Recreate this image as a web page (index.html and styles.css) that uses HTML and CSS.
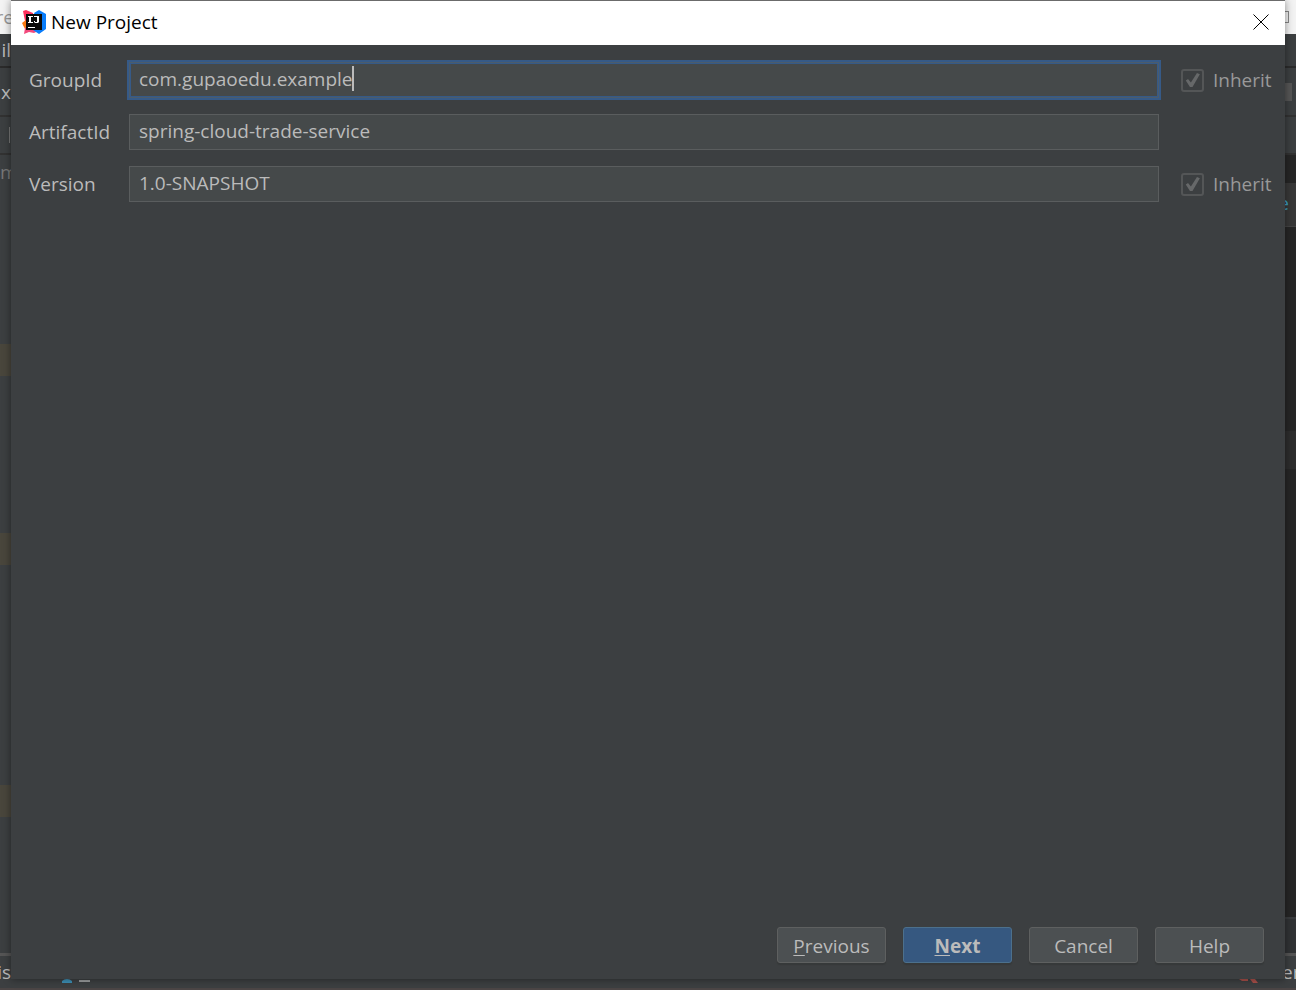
FILE: index.html
```html
<!DOCTYPE html>
<html lang="en">
<head>
    <meta charset="UTF-8">
    <meta name="viewport" content="width=device-width, initial-scale=1.0">
    <title>New Project</title>
    <link rel="stylesheet" href="styles.css">
</head>
<body>

    <!-- main IDE window, only its edges show around the dialog -->
    <div class="ide" aria-hidden="true">
        <div class="ide-row ide-title">
            <span class="edge edge-left">re</span>
            <span class="edge"><i class="maximize"></i></span>
        </div>
        <div class="ide-row ide-menu">
            <span class="edge edge-left">il</span>
        </div>
        <div class="ide-row ide-nav">
            <span class="edge edge-left">.x</span>
            <span class="edge"><i class="nav-button"></i></span>
        </div>
        <div class="ide-row ide-tabs">
            <i class="tab-divider"></i>
        </div>
        <div class="ide-body">
            <div class="tree">
                <span class="edge tree-title">m</span>
                <div class="tree-mark mark-1"></div>
                <div class="tree-mark mark-2"></div>
                <div class="tree-mark mark-3"></div>
            </div>
            <div class="editor">
                <div class="editor-tab"><span class="edge editor-link">e</span></div>
                <div class="editor-line"></div>
                <div class="editor-foot"></div>
            </div>
        </div>
        <div class="ide-row ide-status">
            <span class="edge edge-left">is</span>
            <svg class="status-icons" width="30" height="4" viewBox="0 0 30 4">
                <path d="M0 4V2q2-2 5-2t5 2v2z" fill="#3d8fb5"/>
                <path d="M17 1h11v2H17z" fill="#9a9c9d"/>
            </svg>
            <svg class="status-error" width="20" height="4" viewBox="0 0 20 4">
                <path d="M0 0h9v2H3zM11 0h5l3 4h-5z" fill="#a8504a"/>
            </svg>
            <span class="status-text">er</span>
        </div>
    </div>

    <main class="dialog" role="dialog" aria-labelledby="dialog-title">
        <header class="dialog-header">
            <svg class="logo" width="24" height="24" viewBox="0 0 24 24">
                <path d="M1 1l3-1 7 3 1 8-7 6-4-2 2-4z" fill="#fe315d"/>
                <path d="M0 13l4-3 4 8-5 1z" fill="#f97a12"/>
                <path d="M3 18l9-3 6 5-6 3-5-1-5 2z" fill="#f2497c"/>
                <path d="M12 3l5-3 7 4v15l-7 5-6-4 5-6z" fill="#087cfa"/>
                <path d="M4 4h16v16H4z" fill="#090909"/>
                <path d="M6 6h5v1H9v5h2v1H6v-1h1V7H6zM12 6h5v6l-1 1h-3l-1-1v-1h1v1h2V7h-3zM6 17h7v1H6z" fill="#fff"/>
            </svg>
            <h1 id="dialog-title" class="dialog-title">New Project</h1>
            <button type="button" class="close" aria-label="Close">
                <svg width="16" height="16" viewBox="0 0 16 16">
                    <path d="M0.5 0.5l15 15M15.5 0.5l-15 15" stroke="#000" fill="none"/>
                </svg>
            </button>
        </header>

        <form class="form">
            <div class="fields">
                <label for="group-id">GroupId</label>
                <div class="field focused">
                    <input id="group-id" class="text-input" type="text" value="com.gupaoedu.example" spellcheck="false">
                    <i class="caret"></i>
                </div>
                <label class="inherit"><input type="checkbox" class="check" checked disabled>Inherit</label>

                <label for="artifact-id">ArtifactId</label>
                <div class="field">
                    <input id="artifact-id" class="text-input" type="text" value="spring-cloud-trade-service" spellcheck="false">
                </div>
                <span></span>

                <label for="version">Version</label>
                <div class="field">
                    <input id="version" class="text-input" type="text" value="1.0-SNAPSHOT" spellcheck="false">
                </div>
                <label class="inherit"><input type="checkbox" class="check" checked disabled>Inherit</label>
            </div>

            <div class="buttons">
                <button type="button" class="btn"><u>P</u>revious</button>
                <button type="button" class="btn btn-primary"><u>N</u>ext</button>
                <button type="button" class="btn">Cancel</button>
                <button type="button" class="btn">Help</button>
            </div>
        </form>
    </main>

</body>
</html>
```

FILE: styles.css
```css
* {
    box-sizing: border-box;
}

body {
    margin: 0;
    min-height: 100vh;
    display: flex;
    padding: 1px 11px 11px;
    background-color: #3c3f41;
    color: #bbbbbb;
    font-family: "Open Sans", "Noto Sans", sans-serif;
    font-size: 19px;
    line-height: 24px;
}

/* ---------- IDE behind the dialog ---------- */

.ide {
    position: absolute;
    inset: 0;
    display: flex;
    flex-direction: column;
    overflow: hidden;
    background-color: #3c3f41;
    border-bottom: 2px solid #4b4545;
}

.ide-row {
    display: flex;
    align-items: center;
    justify-content: space-between;
}

.edge {
    display: flex;
    width: 11px;
}

.edge-left {
    justify-content: flex-end;
}

.ide-title {
    height: 34px;
    background-color: #f3f3f3;
    color: #999999;
}

.ide-title .edge-left {
    width: 14px;
}

.maximize {
    width: 4px;
    height: 12px;
    border: 1px solid #888888;
    border-left: 0;
}

.ide-menu {
    height: 34px;
    border-bottom: 2px solid #2b2b2b;
}

.ide-nav {
    height: 49px;
    border-bottom: 2px solid #323232;
}

.nav-button {
    width: 7px;
    height: 18px;
    background-color: #565656;
}

.ide-tabs {
    height: 38px;
    border-bottom: 2px solid #323232;
}

.tab-divider {
    width: 1px;
    height: 16px;
    margin-left: 9px;
    background-color: #777777;
}

.ide-body {
    flex: 1;
    display: flex;
    justify-content: space-between;
    border-bottom: 3px solid #555555;
}

.tree {
    display: flex;
    flex-direction: column;
    width: 11px;
}

.tree-title {
    height: 34px;
    align-items: center;
    color: #777777;
}

.tree-mark {
    height: 32px;
    background-color: #49463c;
}

.mark-1 {
    margin-top: 155px;
}

.mark-2 {
    margin-top: 157px;
}

.mark-3 {
    margin-top: 220px;
}

.editor {
    display: flex;
    flex-direction: column;
    width: 11px;
    padding-top: 28px;
    background-color: #262626;
}

.editor-tab {
    height: 44px;
    padding-top: 8px;
    background-color: #383838;
    border-bottom: 1px solid #444444;
}

.editor-link {
    justify-content: flex-end;
    width: 4px;
    color: #3d9fc5;
}

.editor-line {
    height: 38px;
    margin-top: 204px;
    background-color: #2d2d2d;
}

.editor-foot {
    height: 36px;
    margin-top: auto;
    background-color: #313335;
    border-top: 2px solid #3a3c3e;
}

.ide-status {
    height: 32px;
}

.status-icons {
    align-self: flex-end;
    margin: 0 auto 5px 51px;
}

.status-error {
    align-self: flex-end;
    margin: 0 23px 5px auto;
}

.status-text {
    width: 14px;
}

/* ---------- Dialog ---------- */

.dialog {
    position: relative;
    flex: 1;
    display: flex;
    flex-direction: column;
    background-color: #3c3f41;
    box-shadow: 0 -1px 0 #6b6b6b, 0 0 8px rgba(0, 0, 0, 0.45);
}

.dialog-header {
    display: flex;
    align-items: center;
    height: 44px;
    padding: 0 16px 2px 11px;
    background-color: #ffffff;
    color: #000000;
}

.dialog-title {
    margin: 0 auto 0 5px;
    font-size: 19px;
    font-weight: normal;
}

.close {
    display: flex;
    padding: 0;
    border: 0;
    background: none;
}

.form {
    flex: 1;
    display: flex;
    flex-direction: column;
    justify-content: space-between;
    padding: 17px 14px 16px 18px;
}

.fields {
    display: grid;
    grid-template-columns: 100px 1fr 112px;
    row-gap: 16px;
    align-items: center;
}

.field {
    position: relative;
    display: flex;
}

.text-input {
    width: 100%;
    height: 36px;
    padding: 0 9px 2px;
    border: 1px solid #5a5d5e;
    border-radius: 0;
    outline: 0;
    background-color: #45494a;
    color: #bbbbbb;
    font: inherit;
}

.focused .text-input {
    border-color: #4b5c6c;
    box-shadow: 0 0 0 2px #365a87, inset 0 0 0 1px #365a87;
}

.caret {
    position: absolute;
    top: 4px;
    left: 223px;
    width: 2px;
    height: 25px;
    background-color: #bbbbbb;
}

.inherit {
    display: flex;
    align-items: center;
    gap: 9px;
    padding-left: 22px;
    color: #999999;
}

.check {
    appearance: none;
    display: grid;
    flex-shrink: 0;
    place-items: center;
    width: 23px;
    height: 23px;
    margin: 0;
    border: 2px solid #545657;
    border-radius: 3px;
}

.check::before {
    content: "";
    width: 16px;
    height: 15px;
    background-color: #666869;
    clip-path: polygon(8% 54%, 22% 44%, 40% 66%, 78% 4%, 96% 12%, 50% 96%, 34% 96%);
}

.buttons {
    display: flex;
    justify-content: flex-end;
    gap: 17px;
    padding-right: 7px;
}

.btn {
    width: 109px;
    height: 36px;
    padding: 1px 0 0;
    border: 1px solid #5e6060;
    border-radius: 3px;
    background-color: #4c5052;
    box-shadow: 0 2px 1px #36393a;
    color: #bbbbbb;
    font: inherit;
}

.btn u {
    text-underline-offset: 2px;
}

.btn-primary {
    border-color: #4c708c;
    background-color: #365880;
    font-weight: bold;
}
```
